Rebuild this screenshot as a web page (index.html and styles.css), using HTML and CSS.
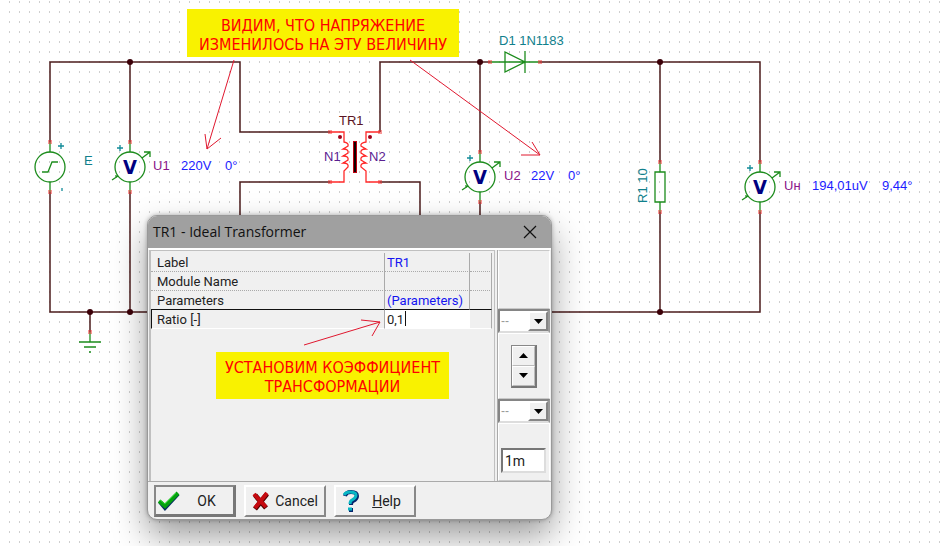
FILE: index.html
```html
<!DOCTYPE html>
<html lang="ru">
<head>
<meta charset="utf-8">
<title>TR1 - Ideal Transformer</title>
<link rel="stylesheet" href="styles.css">
</head>
<body>
<main class="canvas">
  <svg class="layer" aria-label="Schematic">
    <defs>
      <pattern id="grid" x="9" y="1" width="10" height="10" patternUnits="userSpaceOnUse">
        <rect width="1" height="2" fill="#cfcfcf"/>
      </pattern>
      <g id="pin"><path d="M-2-1H2M-2 1H2" stroke="#f03030" stroke-width="1"/></g>
      <g id="meter">
        <path class="part" d="M0-25V-15M0 15V25M12-9L20-15M14-15H20V-10M-12 9L-18 13M-14 8V11"/>
        <circle class="part" r="15"/>
        <use href="#pin" y="-25"/><use href="#pin" y="25"/>
        <path class="plus" d="M-13-19H-7M-10-22V-16"/>
        <text class="volt" x="0" y="7">V</text>
      </g>
    </defs>
    <rect width="100%" height="100%" fill="url(#grid)"/>
    <path class="wire" d="M50 142V62H240V132H330M130 62V142M50 192V312H760V212M130 192V312M330 182H240V312M380 132V62H490M380 182H420V312M480 62V152M480 202V312M540 62H760V162M660 62V162M660 212V312M90 312V332"/>
    <g class="dots">
      <circle cx="130" cy="62" r="3"/><circle cx="480" cy="62" r="3"/><circle cx="660" cy="62" r="3"/>
      <circle cx="90" cy="312" r="3"/><circle cx="130" cy="312" r="3"/><circle cx="660" cy="312" r="3"/>
    </g>
    <g transform="translate(50 167)">
      <path class="part" d="M0-25V-15M0 15V25M-8 5H-2L2-5H8"/>
      <circle class="part" r="15"/>
      <use href="#pin" y="-25"/><use href="#pin" y="25"/>
      <path class="plus" d="M8-21H14M11-24V-18"/>
      <path class="plus" d="M12 21V24"/>
    </g>
    <use href="#meter" x="130" y="167"/>
    <use href="#meter" x="480" y="177"/>
    <use href="#meter" x="760" y="187"/>
    <path class="part" d="M90 332V342M79 342H101M84 347H96M89 352H91"/>
    <use href="#pin" x="90" y="332"/>
    <path class="part" d="M490 62H540M505 52V72L525 62ZM525 51V73"/>
    <path class="pins" d="M489 60V64M491 60V64M539 60V64M541 60V64"/>
    <path class="part" d="M660 162V172M660 202V212M655 172H665V202H655Z"/>
    <use href="#pin" x="660" y="162"/><use href="#pin" x="660" y="212"/>
    <path class="coil" d="M330 132H344V142Q349 143 348 146L343 149Q349 149 348 153L343 156Q349 156 348 160L343 163Q349 163 348 167L344 171V182H330M380 132H366V142Q360 143 361 146L366 149Q360 149 361 153L366 156Q360 156 361 160L366 163Q360 163 361 167L366 171V182H380"/>
    <path class="pins" d="M329 130V134M331 130V134M329 180V184M331 180V184M379 130V134M381 130V134M379 180V184M381 180V184"/>
    <rect x="353" y="141" width="4" height="32" fill="#c00010"/>
    <rect x="354" y="142" width="2" height="30" fill="#100000"/>
    <circle cx="340" cy="137" r="2" fill="#a00018"/><circle cx="370" cy="137" r="2" fill="#a00018"/>
    <g class="text">
      <text class="teal" x="84" y="165">E</text>
      <text class="plum" x="153" y="170">U1</text>
      <text class="blue" x="181" y="170">220V</text><text class="blue" x="225" y="170">0°</text>
      <text class="name" x="339" y="125">TR1</text>
      <text class="violet" x="324" y="161">N1</text><text class="violet" x="369" y="161">N2</text>
      <text class="plum" x="504" y="180">U2</text>
      <text class="blue" x="531" y="180">22V</text><text class="blue" x="568" y="180">0°</text>
      <text class="teal" x="499" y="45">D1 1N1183</text>
      <text class="teal" transform="translate(647 203) rotate(-90)">R1 10</text>
      <text class="plum" x="784" y="190">Uн</text>
      <text class="blue" x="812" y="190">194,01uV</text><text class="blue" x="882" y="190">9,44°</text>
    </g>
  </svg>

  <form class="dialog" aria-labelledby="dialog-title">
    <header class="titlebar">
      <h1 id="dialog-title">TR1 - Ideal Transformer</h1>
      <button type="button" class="close" aria-label="Close">
        <svg width="14" height="14" viewBox="0 0 14 14"><path d="M1 1L13 13M13 1L1 13" stroke="#111" stroke-width="1.2"/></svg>
      </button>
    </header>
    <div class="content">
      <div class="sheet">
        <table class="properties">
          <tr><th scope="row">Label</th><td>TR1</td><td></td></tr>
          <tr><th scope="row">Module Name</th><td></td><td></td></tr>
          <tr><th scope="row">Parameters</th><td>(Parameters)</td><td></td></tr>
          <tr class="active"><th scope="row"><label for="ratio">Ratio [-]</label></th><td><input id="ratio" value="0,1" size="2"><i class="caret"></i></td><td></td></tr>
        </table>
      </div>
      <aside class="side">
        <div class="cell top"></div>
        <div class="combo">
          <select aria-label="Parameter"><option>--</option></select>
          <span class="drop"><svg width="9" height="5"><path d="M0 0H9L4.500 5Z"/></svg></span>
        </div>
        <div class="cell middle">
          <div class="spin">
            <button type="button" aria-label="Up"><svg width="9" height="5"><path d="M0 5H9L4.500 0Z"/></svg></button>
            <button type="button" aria-label="Down"><svg width="9" height="5"><path d="M0 0H9L4.500 5Z"/></svg></button>
          </div>
        </div>
        <div class="combo">
          <select aria-label="Unit"><option>--</option></select>
          <span class="drop"><svg width="9" height="5"><path d="M0 0H9L4.500 5Z"/></svg></span>
        </div>
        <div class="cell bottom"><input class="step" aria-label="Step" value="1m"></div>
      </aside>
    </div>
    <footer class="actions">
      <button type="button" class="action default">
        <svg width="22" height="20" viewBox="0 0 22 20"><path d="M2 11L7 17L20 3" fill="none" stroke="#062f62" stroke-width="4"/><path d="M1 10L7 15L20 2" fill="none" stroke="#05a010" stroke-width="4"/><path d="M2 9L7 13L18 2" fill="none" stroke="#26d52a" stroke-width="1"/></svg>
        <span>OK</span>
      </button>
      <button type="button" class="action">
        <svg width="18" height="20" viewBox="0 0 18 20"><path d="M3 4L14 17M15 3L3 18" stroke="#500000" stroke-width="5"/><path d="M2 3L14 16M15 2L3 17" stroke="#c60a10" stroke-width="4"/></svg>
        <span>Cancel</span>
      </button>
      <button type="button" class="action help">
        <svg width="16" height="22" viewBox="0 0 16 22" fill="none"><path d="M2 6Q3 2 8 2Q14 2 14 6Q14 9 10 11Q8 12 8 15M6 20H10" stroke="#06246c" stroke-width="4"/><path d="M1 5Q3 2 7 2Q13 2 13 5Q13 8 9 10Q7 11 7 14M5 19H9" stroke="#08b6c4" stroke-width="3"/></svg>
        <span><u>H</u>elp</span>
      </button>
    </footer>
  </form>

  <p class="note voltage">ВИДИМ, ЧТО НАПРЯЖЕНИЕ<br>ИЗМЕНИЛОСЬ НА ЭТУ ВЕЛИЧИНУ</p>
  <p class="note ratio">УСТАНОВИМ КОЭФФИЦИЕНТ<br>ТРАНСФОРМАЦИИ</p>
  <svg class="layer arrows" aria-hidden="true">
    <path d="M234 60L207 149M205 134L207 149L221 138M410 60L540 155M532 142L540 155L521 155M304 345L380 322M361 320L380 322L372 336"/>
  </svg>
</main>
</body>
</html>
```
FILE: styles.css
```css
* { box-sizing: border-box; }
body { margin: 0; background: #fff; font-family: Roboto, "Liberation Sans", sans-serif; }
.canvas { position: relative; min-height: 100vh; overflow: hidden; }
.layer { position: absolute; inset: 0; width: 100%; height: 100%; }
.wire { fill: none; stroke: #4c1c1c; stroke-width: 1.5; }
.dots { fill: #3c0008; }
.part { fill: none; stroke: #1c8c1c; stroke-width: 1.3; }
.plus { fill: none; stroke: #108a98; stroke-width: 1.3; }
.pins { stroke: #f03030; }
.coil { fill: none; stroke: #ff2828; stroke-width: 1.3; }
.volt { fill: #000080; font: bold 20px "DejaVu Sans Condensed", "DejaVu Sans", sans-serif; text-anchor: middle; }
.text { font: 13px "Liberation Sans", sans-serif; }
.teal { fill: #10808c; }
.plum { fill: #8a1488; }
.blue { fill: #1c1cff; }
.violet { fill: #5a2090; }
.name { fill: #5a1424; }

.note { position: absolute; margin: 0; background: #f9f200; color: #f00; font: 16px/19px "DejaVu Sans Condensed", "Noto Sans", sans-serif; text-align: center; white-space: nowrap; }
.voltage { left: 187px; top: 9px; width: 272px; padding: 7px 0 3px; }
.ratio { left: 216px; top: 352px; width: 233px; padding: 6px 0 3px; }
.arrows { pointer-events: none; fill: none; stroke: #e0182f; stroke-width: 1; }

.dialog { position: absolute; left: 147px; top: 215px; width: 405px; border: 1px solid #999; border-radius: 10px; background: #f0f0f0; overflow: hidden; box-shadow: 0 16px 34px rgba(0, 0, 0, .4), 0 0 4px rgba(0, 0, 0, .3); }
.titlebar { display: flex; align-items: center; justify-content: space-between; height: 32px; padding: 0 14px 0 5px; background: #a0a0a0; }
.titlebar h1 { margin: 0; font: 14px/20px "Open Sans", sans-serif; color: #111; }
.close { display: flex; padding: 0; border: 0; background: none; }
.content { display: flex; height: 234px; border-top: 2px solid #fff; border-bottom: 1px solid #aaa; }
.sheet { flex: 1; margin-left: 1px; padding: 2px 2px 0 0; border: solid #c0c0c0; border-width: 1px 1px 0 2px; }
.properties { width: 100%; border-collapse: separate; border-spacing: 0; table-layout: fixed; font-size: 13px; line-height: 17px; }
.properties th, .properties td { height: 19px; padding: 1px 2px 0; border-bottom: 1px dotted #aaa; border-right: 1px solid #aaa; text-align: left; font-weight: 400; white-space: nowrap; color: #1414f0; }
.properties th { width: 234px; padding-left: 6px; color: #222; }
.properties td { padding-left: 2px; }
.properties td:last-child { width: 22px; }
.properties tr:nth-child(3) th, .properties tr:nth-child(3) td { border-bottom: 1px solid #111; }
.properties .active th, .properties .active td { border-bottom: 1px solid #fff; }
.properties .active th { border-left: 1px solid #111; padding-left: 5px; }
.properties .active td:nth-child(2) { background: #fff; border-right-color: #fff; }
.properties input { width: 18px; height: 16px; padding: 0; border: 0; outline: 0; background: none; font: inherit; color: #222; vertical-align: top; }
.caret { display: inline-block; width: 1px; height: 15px; background: #111; vertical-align: top; }
.side { display: flex; flex-direction: column; width: 53px; margin: 0 1px 0 2px; border-left: 1px solid #aaa; }
.cell { display: flex; align-items: center; justify-content: center; border: 1px solid #c8c8c8; border-left-color: #fff; border-right-color: #fff; }
.top { height: 59px; }
.middle { height: 66px; border-top-color: #fff; }
.bottom { flex: 1; border-top-color: #fff; padding: 24px 1px 0 0; align-items: flex-start; }
.combo { position: relative; height: 24px; border: 2px solid #858585; border-right-color: #999; border-bottom-color: #ddd; background: #fff; }
.combo select { display: block; width: 100%; height: 20px; padding: 0 0 0 1px; border: 0; outline: 0; appearance: none; background: none; font: 12px/18px "Liberation Sans", sans-serif; color: #999; }
.drop { position: absolute; right: 0; top: 0; display: flex; align-items: center; justify-content: center; width: 20px; height: 20px; border: 2px solid; border-color: #fff #858585 #858585 #fff; background: #f0f0f0; pointer-events: none; }
.spin { width: 26px; border: 1px solid #888; border-right: 2px solid #777; border-bottom: 2px solid #777; }
.spin button { display: flex; align-items: center; justify-content: center; width: 100%; height: 20px; padding: 0; border: 1px solid; border-color: #fff #bbb #bbb #fff; background: #f0f0f0; }
.step { width: 45px; height: 25px; padding: 0 2px; border: 2px solid; border-color: #777 #ddd #ddd #777; outline: 0; background: #fff; font: 14px Roboto, sans-serif; color: #222; }
.actions { display: flex; gap: 8px; padding: 3px 6px 2px; }
.action { display: flex; align-items: center; width: 82px; height: 32px; padding: 0 1px 0 6px; border: 2px solid; border-color: #fff #888 #888 #fff; background: #f0f0f0; font: 14px Roboto, sans-serif; color: #222; white-space: nowrap; }
.action.default { border-color: #888 #777 #777 #888; border-right-width: 3px; border-bottom-width: 3px; padding: 0 0 0 2px; }
.help { padding: 0 0 0 7px; }
.action span { flex: 1; text-align: center; }
```
